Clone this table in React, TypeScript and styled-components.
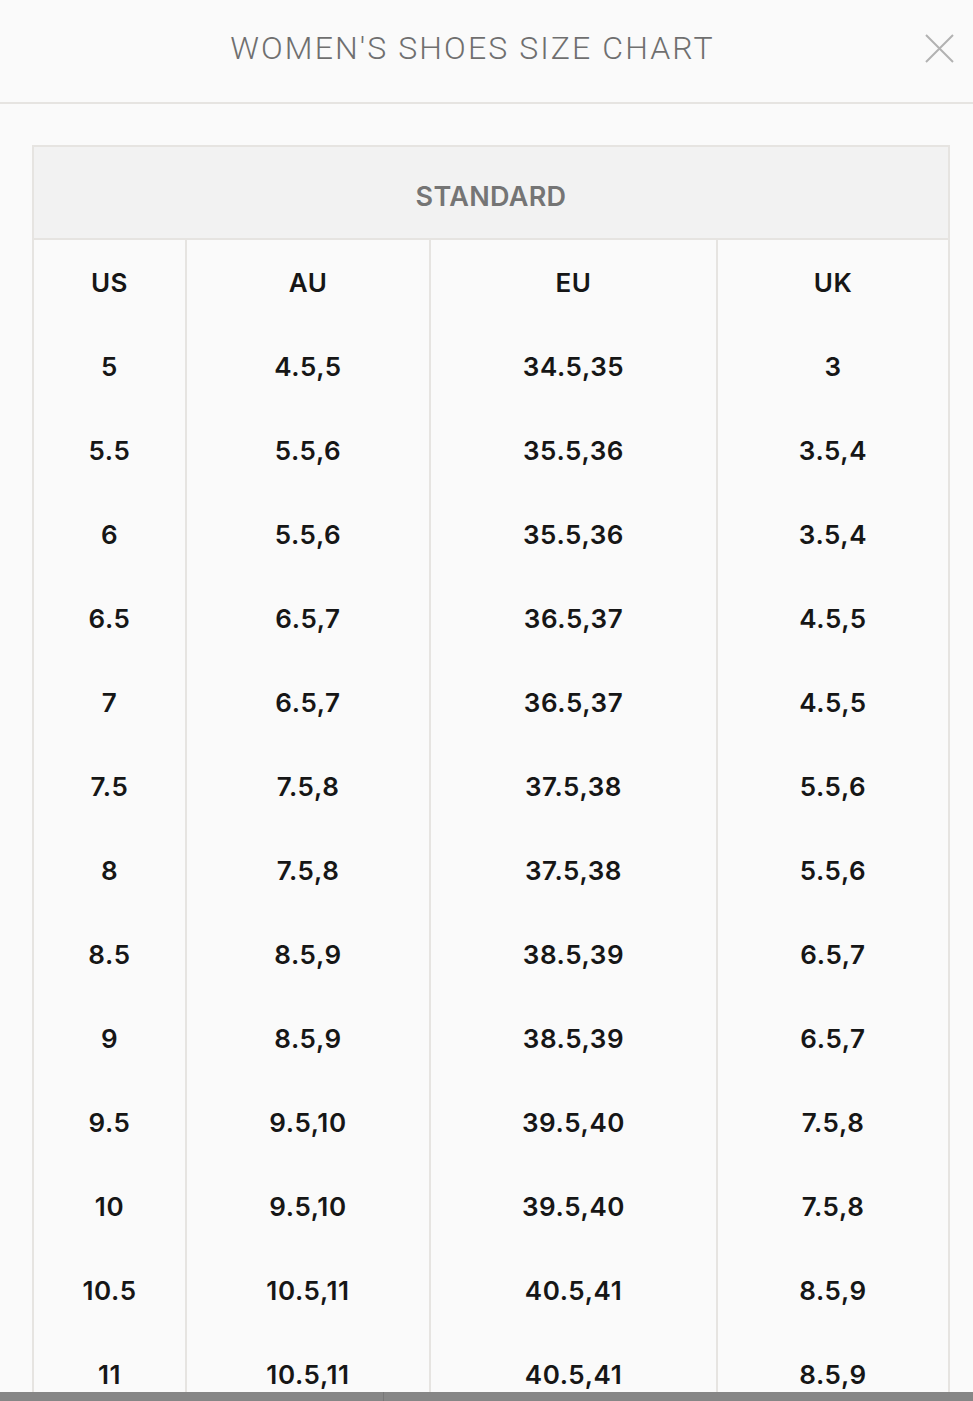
import React from "react";
import styled, { createGlobalStyle } from "styled-components";

const GlobalStyle = createGlobalStyle`
  html, body {
    margin: 0;
    padding: 0;
    background: #fafafa;
  }
  * { box-sizing: border-box; }
`;

const Page = styled.div`
  background: #fafafa;
  min-height: 1401px;
  font-family: Inter, "Noto Sans", sans-serif;
`;

const Header = styled.header`
  position: relative;
  height: 104px;
  display: flex;
  align-items: center;
  justify-content: center;
  border-bottom: 2px solid #e6e4e1;
  padding-bottom: 6px;
`;

const Title = styled.h1`
  margin: 0;
  font-family: Roboto, "Liberation Sans", sans-serif;
  font-weight: 300;
  font-size: 32px;
  letter-spacing: 2.1px;
  color: #6f6f6f;
  margin-left: -28px;
`;

const CloseButton = styled.button`
  position: absolute;
  right: 18px;
  top: 33px;
  width: 31px;
  height: 31px;
  padding: 0;
  border: none;
  background: transparent;
  display: flex;
  align-items: center;
  justify-content: center;
`;

const Body = styled.main`
  padding: 41px 23px 0 32px;
`;

const Table = styled.div`
  width: 918px;
  border: 2px solid #e6e4e1;
  border-bottom: none;
`;

const Caption = styled.div`
  height: 93px;
  background: #f2f2f2;
  border-bottom: 2px solid #e6e4e1;
  display: flex;
  align-items: center;
  justify-content: center;
  padding-top: 8px;
  font-weight: 600;
  font-size: 27px;
  color: #757575;
  letter-spacing: 0.3px;
`;

const Grid = styled.div`
  display: grid;
  grid-template-columns: 151px 244px 287px 232px;
`;

const Cell = styled.div<{ $first?: boolean }>`
  height: 84px;
  display: flex;
  align-items: center;
  justify-content: center;
  border-left: ${(p) => (p.$first ? "none" : "2px solid #e6e4e1")};
  font-weight: 600;
  font-size: 26px;
  letter-spacing: 0.6px;
  color: #161616;
`;

const Footer = styled.footer`
  position: fixed;
  left: 0;
  right: 0;
  bottom: 0;
  height: 9px;
  display: grid;
  grid-template-columns: 383px 1fr;
  background: #858585;
`;

const FooterPart = styled.div<{ $divider?: boolean }>`
  background: #868686;
  border-left: ${(p) => (p.$divider ? "1px solid #777777" : "none")};
`;

const headers = ["US", "AU", "EU", "UK"];
const rows: string[][] = [
  ["5", "4.5,5", "34.5,35", "3"],
  ["5.5", "5.5,6", "35.5,36", "3.5,4"],
  ["6", "5.5,6", "35.5,36", "3.5,4"],
  ["6.5", "6.5,7", "36.5,37", "4.5,5"],
  ["7", "6.5,7", "36.5,37", "4.5,5"],
  ["7.5", "7.5,8", "37.5,38", "5.5,6"],
  ["8", "7.5,8", "37.5,38", "5.5,6"],
  ["8.5", "8.5,9", "38.5,39", "6.5,7"],
  ["9", "8.5,9", "38.5,39", "6.5,7"],
  ["9.5", "9.5,10", "39.5,40", "7.5,8"],
  ["10", "9.5,10", "39.5,40", "7.5,8"],
  ["10.5", "10.5,11", "40.5,41", "8.5,9"],
  ["11", "10.5,11", "40.5,41", "8.5,9"],
];

export default function App() {
  return (
    <Page>
      <GlobalStyle />
      <Header>
        <Title>WOMEN'S SHOES SIZE CHART</Title>
        <CloseButton aria-label="Close">
          <svg width="29" height="29" viewBox="0 0 29 29">
            <path d="M1 1 L28 28 M28 1 L1 28" stroke="#b2b2b2" strokeWidth="2" fill="none" />
          </svg>
        </CloseButton>
      </Header>
      <Body>
        <Table>
          <Caption>STANDARD</Caption>
          <Grid>
            {headers.map((h, i) => (
              <Cell key={h} $first={i === 0}>
                {h}
              </Cell>
            ))}
            {rows.map((r, ri) =>
              r.map((v, ci) => (
                <Cell key={`${ri}-${ci}`} $first={ci === 0}>
                  {v}
                </Cell>
              ))
            )}
          </Grid>
        </Table>
      </Body>
      <Footer>
        <FooterPart />
        <FooterPart $divider />
      </Footer>
    </Page>
  );
}
